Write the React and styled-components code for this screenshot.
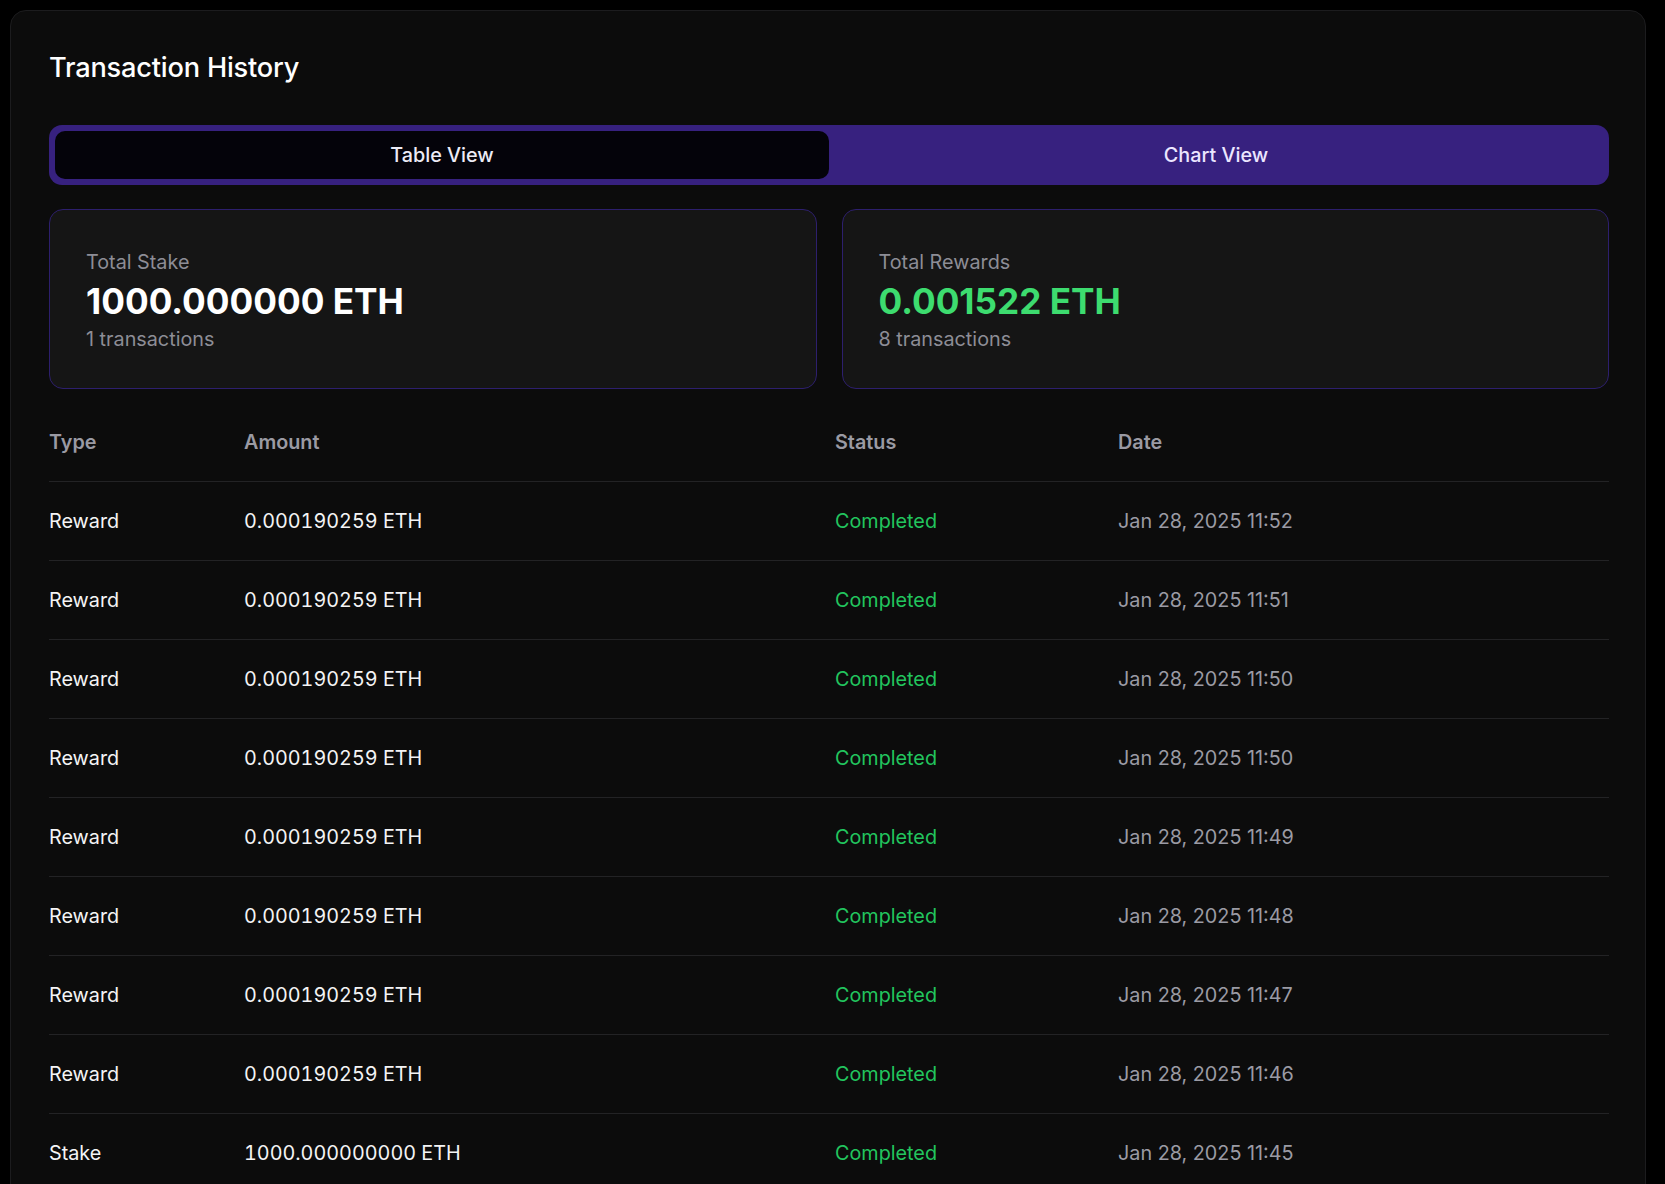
import React from "react"
import styled, { createGlobalStyle } from "styled-components"

const GlobalStyle = createGlobalStyle`
  html, body {
    margin: 0;
    padding: 0;
    background: #000;
    font-family: Inter, "Noto Sans", "Liberation Sans", sans-serif;
    -webkit-font-smoothing: antialiased;
  }
`

const stats = [
  { label: "Total Stake", value: "1000.000000 ETH", count: "1 transactions", green: false },
  { label: "Total Rewards", value: "0.001522 ETH", count: "8 transactions", green: true },
]

const rows = [
  ["Reward", "0.000190259 ETH", "Jan 28, 2025 11:52"],
  ["Reward", "0.000190259 ETH", "Jan 28, 2025 11:51"],
  ["Reward", "0.000190259 ETH", "Jan 28, 2025 11:50"],
  ["Reward", "0.000190259 ETH", "Jan 28, 2025 11:50"],
  ["Reward", "0.000190259 ETH", "Jan 28, 2025 11:49"],
  ["Reward", "0.000190259 ETH", "Jan 28, 2025 11:48"],
  ["Reward", "0.000190259 ETH", "Jan 28, 2025 11:47"],
  ["Reward", "0.000190259 ETH", "Jan 28, 2025 11:46"],
  ["Stake", "1000.000000000 ETH", "Jan 28, 2025 11:45"],
]

const App = () => {
  return (
    <>
      <GlobalStyle />
      <Page>
        <Card>
          <Title>Transaction History</Title>
          <Tabs>
            <Tab active>Table View</Tab>
            <Tab>Chart View</Tab>
          </Tabs>
          <StatGrid>
            {stats.map((s) => (
              <StatCard key={s.label}>
                <StatLabel>{s.label}</StatLabel>
                <StatValue green={s.green}>{s.value}</StatValue>
                <StatLabel>{s.count}</StatLabel>
              </StatCard>
            ))}
          </StatGrid>
          <Table>
            <HeadRow>
              <HeadCell>Type</HeadCell>
              <HeadCell>Amount</HeadCell>
              <HeadCell>Status</HeadCell>
              <HeadCell>Date</HeadCell>
            </HeadRow>
            {rows.map((r, i) => (
              <Row key={i}>
                <Cell>{r[0]}</Cell>
                <Cell numeric>{r[1]}</Cell>
                <Cell tone="green">Completed</Cell>
                <Cell tone="muted">{r[2]}</Cell>
              </Row>
            ))}
          </Table>
        </Card>
      </Page>
    </>
  )
}

export default App

const Page = styled.div`
  padding: 10px 19px 0 10px;
  height: 1184px;
  overflow: hidden;
  box-sizing: border-box;
`

const Card = styled.div`
  background: #0c0c0c;
  border: 1px solid #1c1c1e;
  border-radius: 16px;
  padding: 38px 36px 60px 38px;
  min-height: 1300px;
  box-sizing: border-box;
`

const Title = styled.h2`
  margin: 0;
  font-size: 27.2px;
  line-height: 38px;
  font-weight: 500;
  color: #fff;
  letter-spacing: -0.2px;
`

const Tabs = styled.div`
  margin-top: 38px;
  display: grid;
  grid-template-columns: 1fr 1fr;
  padding: 6px;
  background: #37217f;
  border-radius: 13px;
`

const Tab = styled.div`
  height: 48px;
  display: flex;
  align-items: center;
  justify-content: center;
  border-radius: 10px;
  font-size: 19.8px;
  font-weight: 500;
  color: ${(p) => (p.active ? "#ecebf6" : "#ebe6ff")};
  background: ${(p) => (p.active ? "#04030a" : "transparent")};
`

const StatGrid = styled.div`
  margin-top: 24px;
  display: grid;
  grid-template-columns: 1fr 1fr;
  gap: 25px;
`

const StatCard = styled.div`
  height: 180px;
  box-sizing: border-box;
  padding: 2px 36px 0;
  display: flex;
  flex-direction: column;
  justify-content: center;
  background: #151515;
  border: 1px solid #2d1f6d;
  border-radius: 14px;
`

const StatLabel = styled.div`
  font-size: 19.8px;
  line-height: 28px;
  color: #8d8d96;
`

const StatValue = styled.div`
  margin: 3px 0 2px;
  font-size: 35.2px;
  line-height: 44px;
  font-weight: 700;
  color: ${(p) => (p.green ? "#3ddc6f" : "#fff")};
`

const Table = styled.div`
  margin-top: 14px;
`

const HeadRow = styled.div`
  display: grid;
  grid-template-columns: 195px 591px 283px 1fr;
  height: 78px;
  align-items: center;
  border-bottom: 1px solid #232325;
`

const HeadCell = styled.div`
  font-size: 19.8px;
  font-weight: 600;
  color: #9a9aa3;
`

const Row = styled(HeadRow)``

const Cell = styled.div`
  font-size: 19.8px;
  font-variant-numeric: ${(p) => (p.numeric ? "tabular-nums" : "normal")};
  color: ${(p) =>
    p.tone === "green" ? "#22c55e" : p.tone === "muted" ? "#9b9ba4" : "#f4f4f5"};
`
